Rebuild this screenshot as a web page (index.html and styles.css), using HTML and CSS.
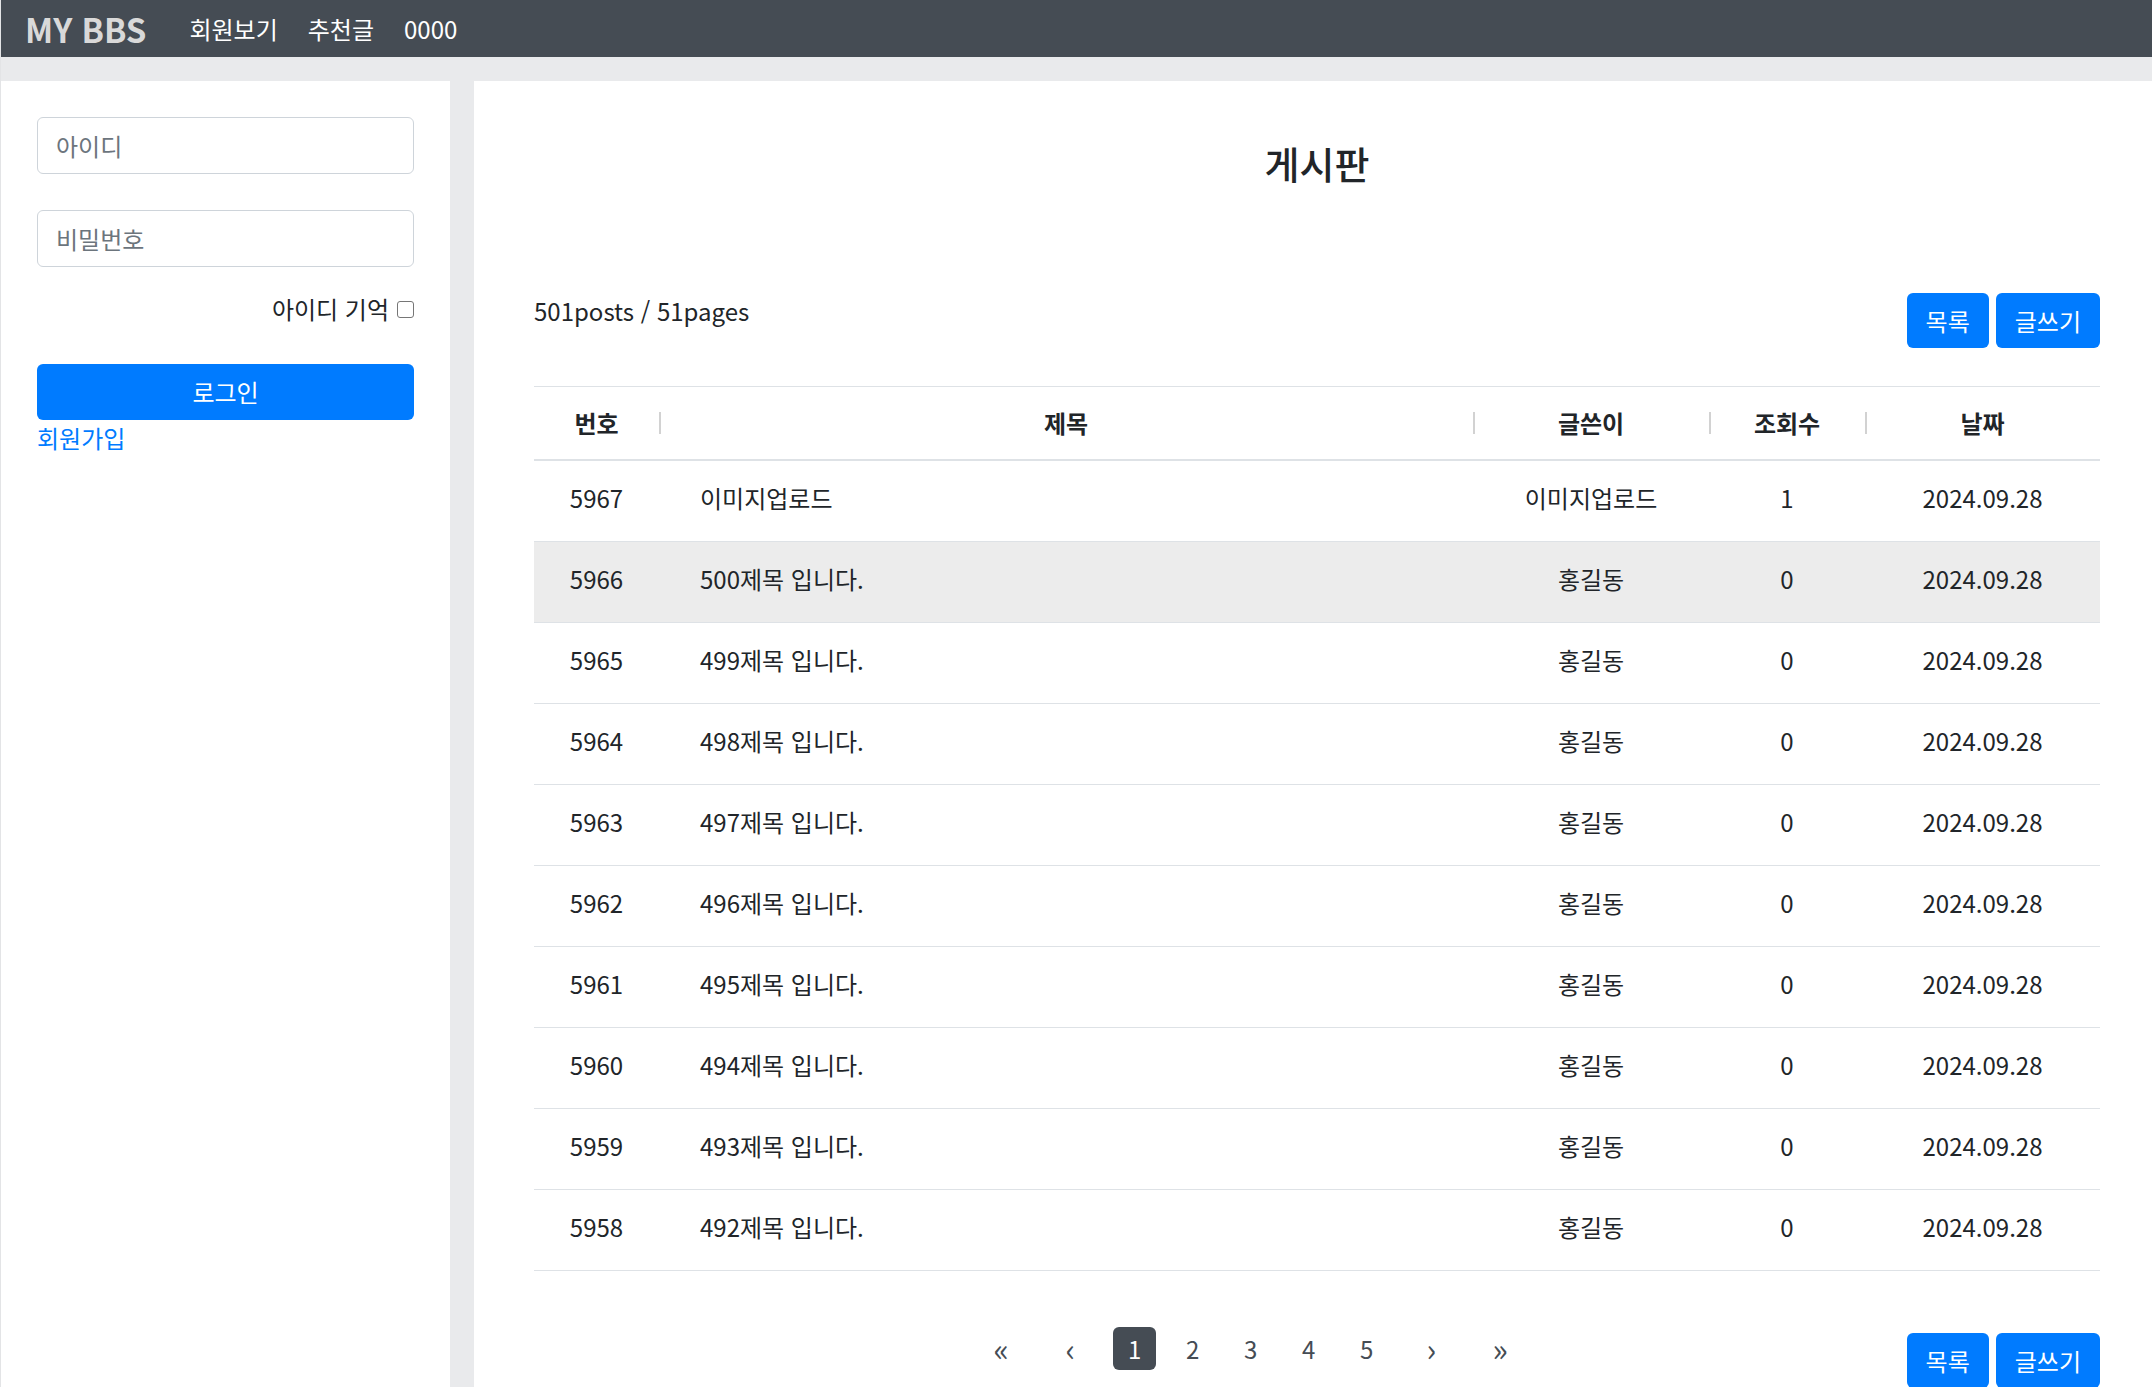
FILE: index.html
```html
<!DOCTYPE html>
<html lang="ko">
<head>
<meta charset="utf-8">
<title>MY BBS</title>
<link rel="stylesheet" href="styles.css">
</head>
<body>
<nav class="topbar">
  <a class="brand" href="#">MY BBS</a>
  <a class="nav-link" href="#">회원보기</a>
  <a class="nav-link" href="#">추천글</a>
  <a class="nav-link" href="#">0000</a>
</nav>
<div class="layout">
  <aside class="sidebar">
    <form class="login-form">
      <input class="field" type="text" placeholder="아이디">
      <input class="field field-pw" type="password" placeholder="비밀번호">
      <label class="remember">아이디 기억 <input class="check" type="checkbox"></label>
      <button class="btn btn-block" type="button">로그인</button>
      <a class="join" href="#">회원가입</a>
    </form>
  </aside>
  <main class="content">
    <h3 class="page-title">게시판</h3>
    <div class="toolbar">
      <div class="count">501posts / 51pages</div>
      <div class="btn-group">
        <button class="btn" type="button">목록</button>
        <button class="btn" type="button">글쓰기</button>
      </div>
    </div>
    <table class="board">
      <colgroup>
        <col class="c-no"><col class="c-title"><col class="c-writer"><col class="c-hit"><col class="c-date">
      </colgroup>
      <thead>
        <tr><th>번호</th><th>제목</th><th>글쓴이</th><th>조회수</th><th>날짜</th></tr>
      </thead>
      <tbody>
        <tr><td>5967</td><td class="t">이미지업로드</td><td>이미지업로드</td><td>1</td><td>2024.09.28</td></tr>
        <tr class="hover"><td>5966</td><td class="t">500제목 입니다.</td><td>홍길동</td><td>0</td><td>2024.09.28</td></tr>
        <tr><td>5965</td><td class="t">499제목 입니다.</td><td>홍길동</td><td>0</td><td>2024.09.28</td></tr>
        <tr><td>5964</td><td class="t">498제목 입니다.</td><td>홍길동</td><td>0</td><td>2024.09.28</td></tr>
        <tr><td>5963</td><td class="t">497제목 입니다.</td><td>홍길동</td><td>0</td><td>2024.09.28</td></tr>
        <tr><td>5962</td><td class="t">496제목 입니다.</td><td>홍길동</td><td>0</td><td>2024.09.28</td></tr>
        <tr><td>5961</td><td class="t">495제목 입니다.</td><td>홍길동</td><td>0</td><td>2024.09.28</td></tr>
        <tr><td>5960</td><td class="t">494제목 입니다.</td><td>홍길동</td><td>0</td><td>2024.09.28</td></tr>
        <tr><td>5959</td><td class="t">493제목 입니다.</td><td>홍길동</td><td>0</td><td>2024.09.28</td></tr>
        <tr><td>5958</td><td class="t">492제목 입니다.</td><td>홍길동</td><td>0</td><td>2024.09.28</td></tr>
      </tbody>
    </table>
    <div class="footer-row">
      <ul class="pagination">
        <li class="page arrow wide2">«</li>
        <li class="page arrow wide1">‹</li>
        <li class="page active">1</li>
        <li class="page">2</li>
        <li class="page">3</li>
        <li class="page">4</li>
        <li class="page">5</li>
        <li class="page arrow wide1">›</li>
        <li class="page arrow wide2">»</li>
      </ul>
      <div class="btn-group low">
        <button class="btn" type="button">목록</button>
        <button class="btn" type="button">글쓰기</button>
      </div>
    </div>
  </main>
</div>
</body>
</html>
```
FILE: styles.css
```css
html {
  background: #e3e4e6;
}
body {
  margin: 0 0 0 1px;
  background: #e9eaec;
  font-family: "Noto Sans CJK KR", "Noto Sans", sans-serif;
  font-size: 24px;
  line-height: 36px;
  color: #212529;
  min-height: 100vh;
}
a { text-decoration: none; }

.topbar {
  height: 57px;
  background: #454c54;
  display: flex;
  align-items: center;
  padding-left: 24px;
}
.brand {
  font-size: 33px;
  font-weight: 700;
  color: #d9d9d9;
  margin-right: 28px;
}
.nav-link {
  color: #ffffff;
  font-size: 24px;
  padding: 0 15px;
}

.layout {
  display: grid;
  grid-template-columns: 449px 1fr;
  column-gap: 24px;
  padding-top: 24px;
  min-height: calc(100vh - 81px);
}
.sidebar {
  background: #ffffff;
  padding: 36px 36px 0 36px;
}
.login-form {
  display: flex;
  flex-direction: column;
}
.field {
  height: 57px;
  box-sizing: border-box;
  border: 1px solid #ced4da;
  border-radius: 6px;
  padding: 0 18px;
  font: inherit;
  color: #495057;
}
.field::placeholder { color: #6c757d; }
.field-pw { margin-top: 36px; }
.remember {
  margin-top: 24px;
  display: flex;
  justify-content: flex-end;
  align-items: center;
  gap: 8px;
}
.check {
  appearance: none;
  -webkit-appearance: none;
  margin: 0;
  width: 17px;
  height: 17px;
  border: 1.5px solid #767676;
  border-radius: 3px;
  background: #fff;
}
.btn {
  background: #007bff;
  color: #ffffff;
  border: none;
  border-radius: 6px;
  font: inherit;
  height: 55px;
  padding: 0 19px;
}
.btn-block {
  margin-top: 37px;
  height: 56px;
  width: 100%;
}
.join {
  color: #007bff;
}

.content {
  background: #ffffff;
  padding: 60px 52px 0 60px;
}
.page-title {
  margin: 0;
  text-align: center;
  font-size: 38px;
  line-height: 43px;
  font-weight: 500;
}
.toolbar {
  margin-top: 109px;
  display: flex;
  justify-content: space-between;
  align-items: flex-start;
}
.btn-group {
  display: flex;
  gap: 7px;
}

.board {
  margin-top: 38px;
  width: 100%;
  border-collapse: collapse;
  table-layout: fixed;
}
.c-no { width: 125px; }
.c-title { width: 814px; }
.c-writer { width: 236px; }
.c-hit { width: 156px; }
.c-date { width: 235px; }
.board th {
  position: relative;
  padding: 18px 0;
  font-weight: 700;
  text-align: center;
  border-top: 1px solid #dee2e6;
  border-bottom: 2px solid #dee2e6;
}
.board th + th::before {
  content: "";
  position: absolute;
  left: 0;
  top: 50%;
  margin-top: -11px;
  width: 2px;
  height: 22px;
  background: #d2d2d2;
}
.board td {
  padding: 19px 0 25px;
  text-align: center;
  border-bottom: 1px solid #dee2e6;
}
.board td.t {
  text-align: left;
  padding-left: 41px;
}
.board tr.hover td {
  background: #ececec;
}

.footer-row {
  display: flex;
  align-items: flex-start;
  margin-top: 56px;
}
.pagination {
  flex: 1;
  list-style: none;
  margin: 0;
  padding: 0 0 0 61px;
  display: flex;
  justify-content: center;
  gap: 15px;
}
.page {
  width: 43px;
  height: 43px;
  line-height: 43px;
  text-align: center;
  color: #454c54;
  border-radius: 6px;
}
.page.arrow { font-size: 32px; }
.page.wide1 { width: 56px; }
.page.wide2 { width: 52px; }
.page.active {
  background: #454c54;
  color: #ffffff;
}
.btn-group.low { margin-top: 6px; }
```
